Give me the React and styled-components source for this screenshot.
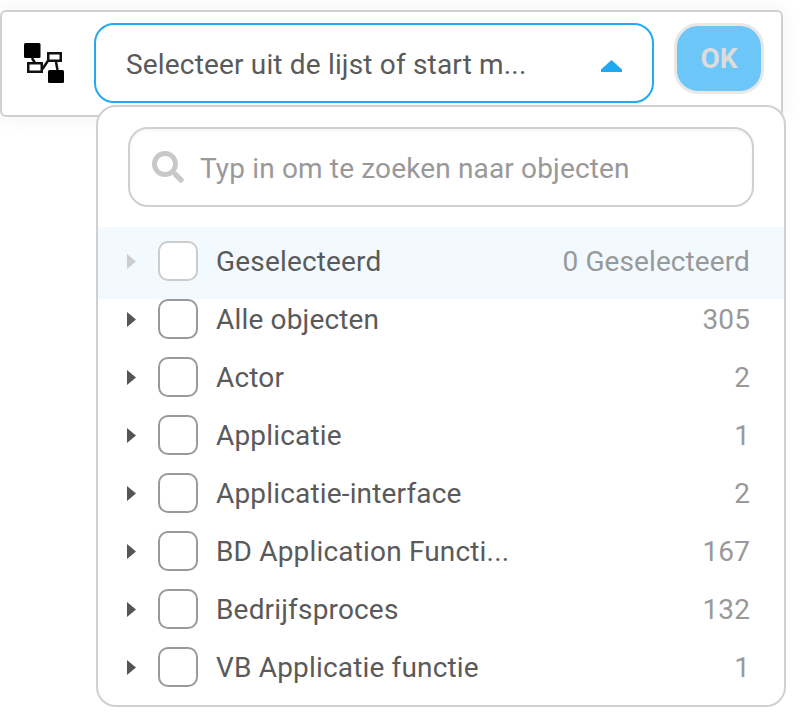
import React from 'react'
import styled, { createGlobalStyle } from 'styled-components'
import { FaSearch } from 'react-icons/fa'

const rows = [
    { name: 'Geselecteerd', count: '0 Geselecteerd', selected: true },
    { name: 'Alle objecten', count: '305' },
    { name: 'Actor', count: '2' },
    { name: 'Applicatie', count: '1' },
    { name: 'Applicatie-interface', count: '2' },
    { name: 'BD Application Functi...', count: '167' },
    { name: 'Bedrijfsproces', count: '132' },
    { name: 'VB Applicatie functie', count: '1' },
]

function ModelIcon() {
    return (
        <svg width="42" height="42" viewBox="0 0 42 42">
            <rect x="0" y="0" width="16.5" height="15" rx="1.5" fill="#000" />
            <rect x="24" y="27" width="16" height="13" rx="1.5" fill="#000" />
            <g fill="none" stroke="#111" strokeWidth="2.5">
                <rect x="4.25" y="20.25" width="13.5" height="8.5" />
                <rect x="24.25" y="10.25" width="12.5" height="7.5" />
                <path d="M8 15 L11 20 M18.5 26 L24.5 17 M32 19 L33.5 27" />
            </g>
        </svg>
    )
}

function App() {
    return (
        <Page>
            <GlobalStyle />
            <Toolbar>
                <IconSlot><ModelIcon /></IconSlot>
                <SelectWrap>
                    <SelectBox>
                        <SelectText>Selecteer uit de lijst of start m...</SelectText>
                        <Caret />
                    </SelectBox>
                    <Dropdown>
                        <SearchBox>
                            <SearchIcon />
                            <SearchText>Typ in om te zoeken naar objecten</SearchText>
                        </SearchBox>
                        <List>
                            {rows.map((row) => (
                                <Row key={row.name} $selected={row.selected}>
                                    <Arrow $selected={row.selected} />
                                    <Check $selected={row.selected} />
                                    <Name>{row.name}</Name>
                                    <Count>{row.count}</Count>
                                </Row>
                            ))}
                        </List>
                    </Dropdown>
                </SelectWrap>
                <OkButton>OK</OkButton>
            </Toolbar>
        </Page>
    )
}

export default App

const GlobalStyle = createGlobalStyle`
    html, body {
        margin: 0;
        padding: 0;
        background: #fff;
        font-family: Roboto, "Liberation Sans", sans-serif;
    }
    * {
        box-sizing: border-box;
    }
`

const Page = styled.div`
    height: 715px;
    padding-top: 10px;
`

const Toolbar = styled.div`
    display: flex;
    align-items: flex-start;
    width: 783px;
    height: 107px;
    padding: 11px 19px 0 22px;
    background: #fff;
    border: 2px solid #d0d0d0;
    border-radius: 6px;
    box-shadow: 0 0 24px rgba(0, 0, 0, 0.06);
`

const IconSlot = styled.div`
    width: 70px;
    height: 60px;
    padding-top: 20px;
    flex: none;
`

const SelectWrap = styled.div`
    position: relative;
    width: 560px;
    flex: none;
`

const SelectBox = styled.div`
    display: flex;
    align-items: center;
    justify-content: space-between;
    height: 80px;
    padding: 0 30px 0 30px;
    border: 2px solid #22a9ef;
    border-radius: 20px;
    background: #fff;
`

const SelectText = styled.span`
    padding-top: 2px;
    font-size: 28px;
    letter-spacing: 0.17px;
    color: #5a5a5a;
    white-space: nowrap;
`

const Caret = styled.span`
    display: block;
    width: 21px;
    height: 12px;
    margin-top: 6px;
    background: #1fa8f0;
    clip-path: polygon(50% 0, 100% 80%, 100% 100%, 0 100%, 0 80%);
`

const Dropdown = styled.div`
    position: absolute;
    top: 82px;
    left: 2px;
    width: 690px;
    height: 602px;
    padding-top: 20px;
    background: #fff;
    border: 2px solid #d0d0d0;
    border-radius: 20px;
    overflow: hidden;
`

const SearchBox = styled.div`
    display: flex;
    align-items: center;
    width: 626px;
    height: 80px;
    margin-left: 30px;
    padding-left: 22px;
    border: 2px solid #d0d0d0;
    border-radius: 20px;
    box-shadow: inset 0 2px 3px rgba(0, 0, 0, 0.04);
`

const SearchIcon = styled(FaSearch)`
    width: 32px;
    height: 32px;
    color: #c8c8c8;
    flex: none;
`

const SearchText = styled.span`
    margin-left: 16px;
    padding-top: 2px;
    font-size: 28px;
    letter-spacing: 0.15px;
    color: #999;
    white-space: nowrap;
`

const List = styled.div`
    margin-top: 20px;
`

const Row = styled.div`
    display: flex;
    align-items: flex-start;
    height: ${(p) => (p.$selected ? '72px' : '58px')};
    padding: ${(p) => (p.$selected ? '14px' : '0')} 34px 0 29px;
    background: ${(p) => (p.$selected ? '#f2faff' : 'transparent')};
`

const Arrow = styled.span`
    width: 9px;
    height: 15px;
    margin-top: 13px;
    flex: none;
    background: ${(p) => (p.$selected ? '#ccc' : '#555')};
    clip-path: polygon(0 0, 100% 50%, 0 100%);
`

const Check = styled.span`
    width: 40px;
    height: 40px;
    margin-left: 22px;
    flex: none;
    background: #fff;
    border: 2px solid ${(p) => (p.$selected ? '#ccc' : '#999')};
    border-radius: 10px;
`

const Name = styled.span`
    margin-left: 18px;
    flex: 1;
    font-size: 28px;
    letter-spacing: 0.17px;
    line-height: 42px;
    color: #5a5a5a;
    white-space: nowrap;
`

const Count = styled.span`
    font-size: 28px;
    letter-spacing: 0.1px;
    line-height: 42px;
    color: #999;
    white-space: nowrap;
`

const OkButton = styled.div`
    display: flex;
    align-items: center;
    justify-content: center;
    width: 90px;
    height: 71px;
    margin-left: 20px;
    flex: none;
    background: #6cc6f7;
    border: 3px solid #e8e8e8;
    border-radius: 24px;
    font-size: 28px;
    font-weight: 700;
    color: #dcdcdc;
`
